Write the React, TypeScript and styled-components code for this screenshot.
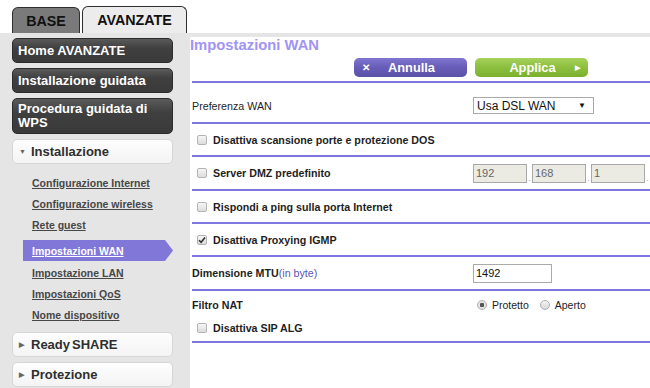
import React from 'react'
import styled, { createGlobalStyle } from 'styled-components'

const GlobalStyle = createGlobalStyle`
  body {
    margin: 0;
    font-family: 'Liberation Sans', Arial, sans-serif;
    background: #fff;
  }
`

const sideLinks = [
  'Configurazione Internet',
  'Configurazione wireless',
  'Rete guest',
  'Impostazioni WAN',
  'Impostazione LAN',
  'Impostazioni QoS',
  'Nome dispositivo',
]

const Checkbox: React.FC<{ checked?: boolean }> = ({ checked }) => (
  <CheckBoxBox>
    {checked && (
      <svg width="8" height="8" viewBox="0 0 8 8">
        <path d="M1 4.2 L3.1 6.3 L7 1.4" fill="none" stroke="#333" strokeWidth="1.6" />
      </svg>
    )}
  </CheckBoxBox>
)

const App: React.FC = () => {
  return (
    <Page>
      <GlobalStyle />
      <TabBar>
        <Tab>BASE</Tab>
        <Tab active>AVANZATE</Tab>
      </TabBar>
      <Body>
        <Sidebar>
          <NavButton>Home AVANZATE</NavButton>
          <NavButton>Installazione guidata</NavButton>
          <NavButton tall>
            Procedura guidata di
            <br />
            WPS
          </NavButton>
          <Section>
            <Caret>▼</Caret>Installazione
          </Section>
          <LinkList>
            {sideLinks.map((l) => (
              <SideLink key={l} active={l === 'Impostazioni WAN'}>
                <span>{l}</span>
              </SideLink>
            ))}
          </LinkList>
          <Section gap={7}>
            <Caret>▶</Caret>Ready<Spaced>SHARE</Spaced>
          </Section>
          <Section>
            <Caret>▶</Caret>Protezione
          </Section>
        </Sidebar>
        <Content>
          <Title>Impostazioni WAN</Title>
          <ButtonRow>
            <ActionButton variant="cancel">
              <BtnIcon>✕</BtnIcon>
              <span>Annulla</span>
              <span />
            </ActionButton>
            <ActionButton variant="apply">
              <span />
              <span>Applica</span>
              <BtnIcon small>▶</BtnIcon>
            </ActionButton>
          </ButtonRow>
          <Rows>
            <Row h={41} top={6}>
              <Label>Preferenza WAN</Label>
              <Control>
                <SelectBox>
                  <span>Usa DSL WAN</span>
                  <SelectArrow>▼</SelectArrow>
                </SelectBox>
              </Control>
            </Row>
            <Row h={33}>
              <CheckLabel>
                <Checkbox />
                Disattiva scansione porte e protezione DOS
              </CheckLabel>
            </Row>
            <Row h={34}>
              <CheckLabel>
                <Checkbox />
                Server DMZ predefinito
              </CheckLabel>
              <Control>
                <IpGroup>
                  <IpField readOnly value="192" />
                  <Dot>.</Dot>
                  <IpField readOnly value="168" />
                  <Dot>.</Dot>
                  <IpField readOnly value="1" />
                  <Dot>.</Dot>
                  <IpField readOnly value="" />
                </IpGroup>
              </Control>
            </Row>
            <Row h={33}>
              <CheckLabel>
                <Checkbox />
                Rispondi a ping sulla porta Internet
              </CheckLabel>
            </Row>
            <Row h={33}>
              <CheckLabel>
                <Checkbox checked />
                Disattiva Proxying IGMP
              </CheckLabel>
            </Row>
            <Row h={34}>
              <Label bold>
                Dimensione MTU<Hint>(in byte)</Hint>
              </Label>
              <Control>
                <TextField readOnly value="1492" />
              </Control>
            </Row>
            <NatRow>
              <NatLine>
                <Label bold>Filtro NAT</Label>
                <Control>
                  <RadioGroup>
                    <Radio checked />
                    <RadioText>Protetto</RadioText>
                    <Radio />
                    <RadioText>Aperto</RadioText>
                  </RadioGroup>
                </Control>
              </NatLine>
              <CheckLabel>
                <Checkbox />
                Disattiva SIP ALG
              </CheckLabel>
            </NatRow>
          </Rows>
        </Content>
      </Body>
    </Page>
  )
}

const Page = styled.div`
  width: 650px;
  height: 388px;
  overflow: hidden;
  background: #fff;
`

const TabBar = styled.div`
  height: 33px;
  display: flex;
  align-items: flex-end;
  gap: 2px;
  padding-left: 12px;
`

const Tab = styled.div<{ active?: boolean }>`
  width: ${(p) => (p.active ? 105 : 68)}px;
  height: ${(p) => (p.active ? 27 : 26)}px;
  box-sizing: border-box;
  display: flex;
  align-items: center;
  justify-content: center;
  border: 1px solid #2e2e2e;
  border-bottom: none;
  border-radius: 6px 6px 0 0;
  background: ${(p) => (p.active ? '#ececec' : '#7a7a7a')};
  color: #111;
  font-size: 14.3px;
  font-weight: bold;
`

const Body = styled.div`
  display: grid;
  grid-template-columns: 190px 1fr;
  background: #e5e5e5;
  height: 355px;
`

const Sidebar = styled.div`
  padding: 5px 0 0 12px;
  display: flex;
  flex-direction: column;
`

const NavButton = styled.div<{ tall?: boolean }>`
  width: 161px;
  height: ${(p) => (p.tall ? 36 : 25)}px;
  box-sizing: border-box;
  margin-bottom: 5px;
  padding: ${(p) => (p.tall ? '3px 5px' : '0 5px')};
  display: flex;
  align-items: center;
  border-radius: 5px;
  background: linear-gradient(#5a5a5a, #3f3f3f 40%, #3a3a3a);
  border: 1px solid #2c2c2c;
  color: #fff;
  font-size: 13px;
  font-weight: bold;
  line-height: 14px;
`

const Section = styled.div<{ gap?: number }>`
  width: 161px;
  height: 25px;
  box-sizing: border-box;
  margin-top: ${(p) => p.gap ?? 0}px;
  margin-bottom: 5px;
  padding-left: 6px;
  display: flex;
  align-items: center;
  border-radius: 5px;
  background: linear-gradient(#fdfdfd, #f4f4f4);
  border: 1px solid #d6d6d6;
  color: #2f2f2f;
  font-size: 13px;
  font-weight: bold;
`

const Spaced = styled.span`
  margin-left: 2px;
`

const Caret = styled.span`
  font-size: 7px;
  color: #666;
  width: 12px;
`

const LinkList = styled.div`
  display: flex;
  flex-direction: column;
  margin-top: 3px;
`

const SideLink = styled.div<{ active?: boolean }>`
  height: 21px;
  display: flex;
  align-items: center;
  font-size: 10.5px;
  font-weight: bold;
  span {
    text-decoration: underline;
  }
  color: ${(p) => (p.active ? '#fff' : '#474747')};
  margin-left: ${(p) => (p.active ? 11 : 20)}px;
  padding-left: ${(p) => (p.active ? 9 : 0)}px;
  ${(p) =>
    p.active &&
    `
    width: 150px;
    box-sizing: border-box;
    margin-top: 5px;
    margin-bottom: 1px;
    background: #8177d8;
    clip-path: polygon(0 0, calc(100% - 8px) 0, 100% 50%, calc(100% - 8px) 100%, 0 100%);
  `}
`

const Content = styled.div`
  margin-top: 4px;
  background: #fff;
  overflow: hidden;
`

const Title = styled.div`
  height: 17px;
  line-height: 17px;
  color: #a194f4;
  font-size: 14.8px;
  font-weight: bold;
`

const ButtonRow = styled.div`
  display: flex;
  gap: 8px;
  padding-left: 164px;
  margin-top: 4px;
  height: 23px;
`

const ActionButton = styled.div<{ variant: 'cancel' | 'apply' }>`
  width: 113px;
  height: 19px;
  display: grid;
  grid-template-columns: 24px 1fr 22px;
  align-items: center;
  text-align: center;
  border-radius: 5px;
  color: #fff;
  font-size: 12.8px;
  font-weight: bold;
  background: ${(p) =>
    p.variant === 'cancel'
      ? 'linear-gradient(#8076d2, #675db8 50%, #5a51a8)'
      : 'linear-gradient(#a6d15a, #8cbf3e 50%, #7bb02f)'};
`

const BtnIcon = styled.span<{ small?: boolean }>`
  font-size: ${(p) => (p.small ? 7 : 10)}px;
`

const Rows = styled.div`
  margin-left: 2px;
  border-top: 2px solid #7e77e2;
`

const Row = styled.div<{ h: number; top?: number }>`
  height: ${(p) => p.h}px;
  display: flex;
  align-items: center;
  padding-top: ${(p) => p.top ?? 0}px;
  box-sizing: border-box;
  border-bottom: 2px solid #7e77e2;
`

const Label = styled.div<{ bold?: boolean }>`
  width: 281px;
  flex: none;
  font-size: 10.7px;
  color: #1e1e1e;
  font-weight: ${(p) => (p.bold ? 'bold' : 'normal')};
`

const Hint = styled.span`
  font-weight: normal;
  color: #5b55b5;
`

const CheckLabel = styled.div`
  width: 281px;
  flex: none;
  display: flex;
  align-items: center;
  gap: 6px;
  padding-left: 5px;
  box-sizing: border-box;
  font-size: 10.7px;
  font-weight: bold;
  color: #1e1e1e;
`

const CheckBoxBox = styled.span`
  width: 10px;
  height: 10px;
  flex: none;
  box-sizing: border-box;
  display: flex;
  align-items: center;
  justify-content: center;
  border: 1px solid #b4b4b4;
  border-radius: 2px;
  background: linear-gradient(#f6f6f6, #dcdcdc);
`

const Control = styled.div`
  display: flex;
  align-items: center;
`

const SelectBox = styled.div`
  width: 121px;
  height: 17px;
  box-sizing: border-box;
  display: flex;
  align-items: center;
  justify-content: space-between;
  padding: 0 7px 0 3px;
  border: 1px solid #a9a9a9;
  background: #fff;
  font-size: 12px;
  color: #111;
`

const SelectArrow = styled.span`
  font-size: 8px;
  color: #111;
`

const IpGroup = styled.div`
  display: flex;
  align-items: flex-end;
`

const IpField = styled.input`
  width: 54px;
  height: 19px;
  box-sizing: border-box;
  padding: 0 2px;
  border: 1px solid #a9a9a9;
  background: #ebebe4;
  font-family: 'Liberation Sans', Arial, sans-serif;
  font-size: 11px;
  color: #666;
  outline: none;
`

const Dot = styled.span`
  width: 5px;
  text-align: center;
  font-size: 8px;
  line-height: 8px;
  color: #8a7fd6;
`

const TextField = styled.input`
  width: 79px;
  height: 19px;
  box-sizing: border-box;
  padding: 0 2px;
  border: 1px solid #a9a9a9;
  background: #fff;
  font-family: 'Liberation Sans', Arial, sans-serif;
  font-size: 11px;
  color: #111;
  outline: none;
`

const NatRow = styled.div`
  height: 52px;
  box-sizing: border-box;
  padding-top: 6px;
  border-bottom: 2px solid #7e77e2;
  display: flex;
  flex-direction: column;
  gap: 9px;
`

const NatLine = styled.div`
  height: 16px;
  display: flex;
  align-items: center;
`

const RadioGroup = styled.div`
  display: flex;
  align-items: center;
  padding-left: 4px;
`

const Radio = styled.span<{ checked?: boolean }>`
  width: 10px;
  height: 10px;
  box-sizing: border-box;
  border-radius: 50%;
  border: 1px solid #b0b0b0;
  background: ${(p) =>
    p.checked
      ? 'radial-gradient(circle, #555 0 2px, #e4e4e4 2.5px)'
      : 'linear-gradient(#f4f4f4, #d8d8d8)'};
`

const RadioText = styled.span`
  font-size: 10.5px;
  color: #1e1e1e;
  margin: 0 11px 0 5px;
`

export default App
